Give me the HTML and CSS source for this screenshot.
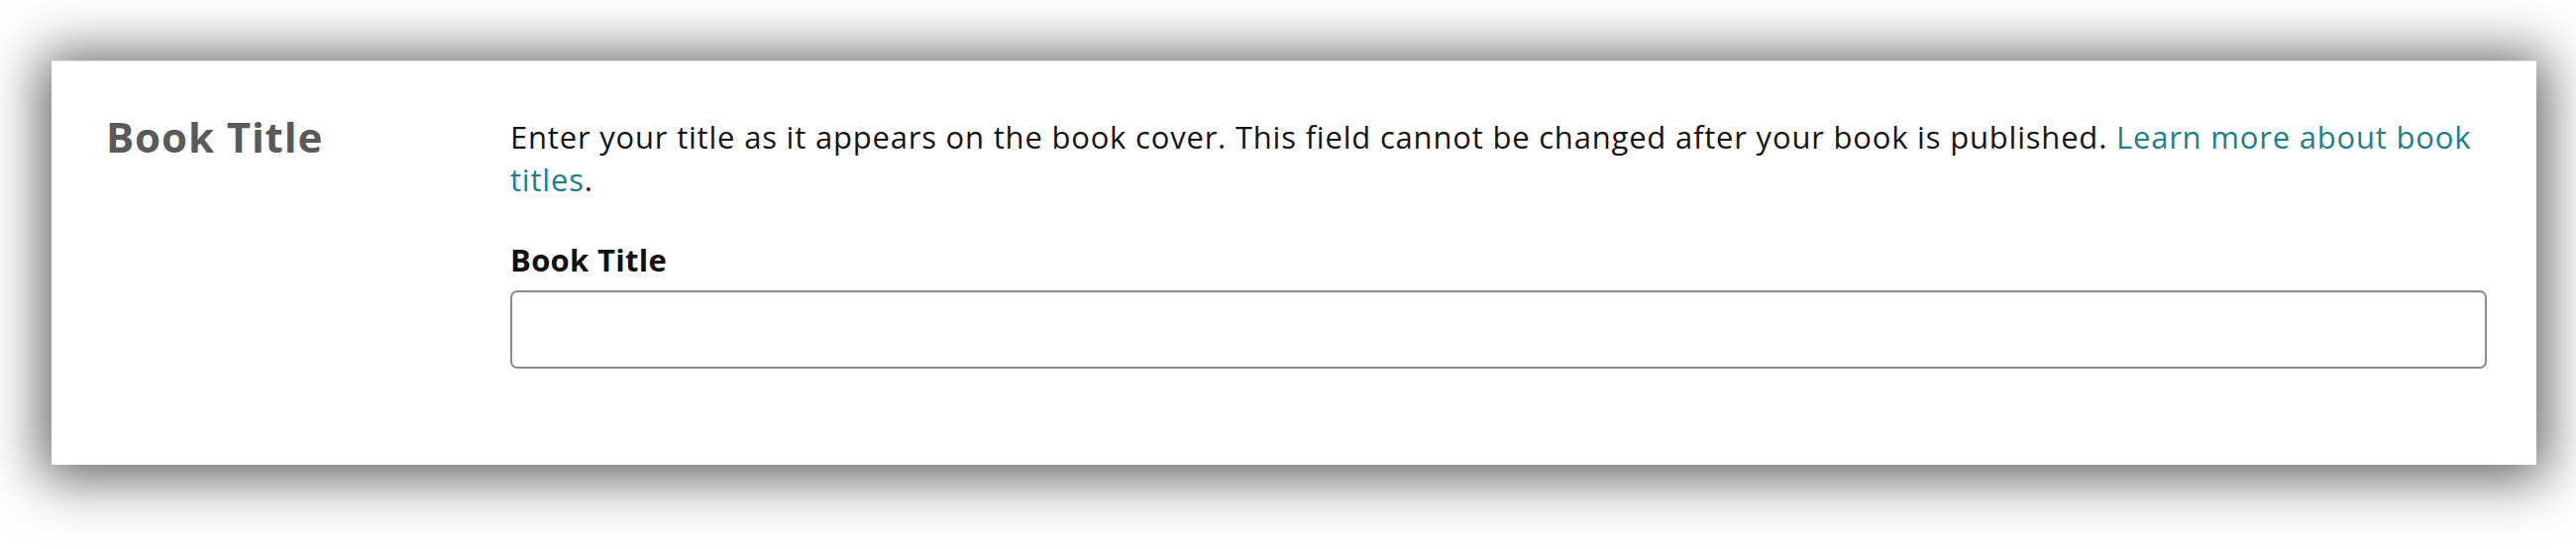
FILE: index.html
```html
<!DOCTYPE html>
<html lang="en">
<head>
<meta charset="utf-8">
<title>Book Title</title>
<link rel="stylesheet" href="styles.css">
</head>
<body>
<div class="page">
  <section class="card">
    <div class="side">
      <h2 class="side-title">Book Title</h2>
    </div>
    <div class="main">
      <p class="intro">Enter your title as it appears on the book cover. This field cannot be changed after your book is published. <a class="link" href="#">Learn more about book titles</a>.</p>
      <label class="field-label" for="title">Book Title</label>
      <input class="field-input" id="title" type="text">
    </div>
  </section>
</div>
</body>
</html>
```
FILE: styles.css
```css
html, body {
  margin: 0;
  padding: 0;
  background: #ffffff;
}
body {
  font-family: "Open Sans", "Noto Sans", "Liberation Sans", sans-serif;
  color: #111111;
}
.page {
  height: 554px;
  box-sizing: border-box;
  padding: 61px 40px 0 52px;
  overflow: hidden;
}
.card {
  width: 2508px;
  height: 408px;
  box-sizing: border-box;
  background: #ffffff;
  border-top: 1px solid #e2e2e2;
  box-shadow: 0 4px 52px 10px rgba(0, 0, 0, 0.62);
  display: flex;
  padding: 47px 50px 0 55px;
}
.side {
  width: 408px;
  flex: none;
}
.side-title {
  margin: 0;
  font-size: 42px;
  line-height: 58px;
  letter-spacing: 0.9px;
  font-weight: 700;
  color: #5a5a5a;
}
.main {
  flex: 1;
  display: flex;
  flex-direction: column;
  padding-top: 8px;
}
.intro {
  margin: 0;
  font-size: 31px;
  line-height: 43px;
  letter-spacing: 0.8px;
  color: #141414;
}
.link {
  color: #1e7e8b;
  text-decoration: none;
}
.field-label {
  margin-top: 38px;
  font-size: 31px;
  line-height: 43px;
  letter-spacing: 0.3px;
  font-weight: 700;
  color: #111111;
}
.field-input {
  margin-top: 9px;
  height: 79px;
  box-sizing: border-box;
  border: 2px solid #8c8c8c;
  border-radius: 7px;
  background: #fff;
  font-size: 30px;
  padding: 0 16px;
  box-shadow: inset 0 1px 2px rgba(0,0,0,0.08);
}
```
